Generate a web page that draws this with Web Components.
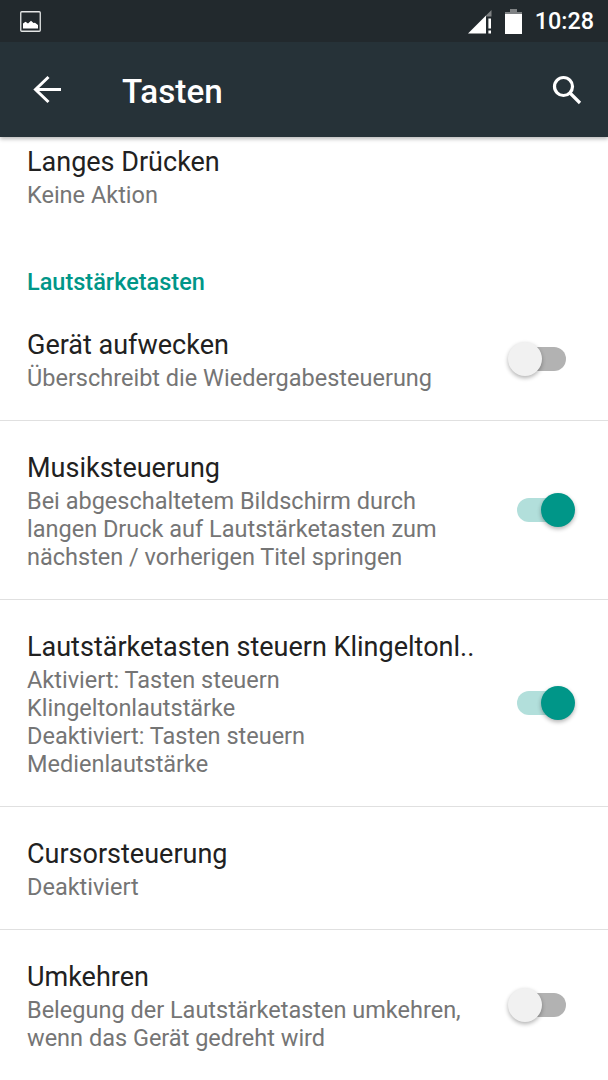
<!DOCTYPE html>
<html><head><meta charset="utf-8"><style>
html,body{margin:0;padding:0;background:#fff}
body{width:608px;height:1080px;overflow:hidden;font-family:Roboto,"Noto Sans",sans-serif}
settings-screen{height:1080px}
</style></head><body>
<settings-screen>
<status-bar slot="top"></status-bar>
<app-bar slot="top" title="Tasten"></app-bar>
<pref-row plain title="Langes Drücken" class="first">Keine Aktion</pref-row>
<pref-category>Lautstärketasten</pref-category>
<pref-row title="Gerät aufwecken" toggle="off" divider>Überschreibt die Wiedergabesteuerung</pref-row>
<pref-row title="Musiksteuerung" toggle="on" divider>Bei abgeschaltetem Bildschirm durch<br>langen Druck auf Lautstärketasten zum<br>nächsten / vorherigen Titel springen</pref-row>
<pref-row title="Lautstärketasten steuern Klingeltonl.." toggle="on" divider>Aktiviert: Tasten steuern<br>Klingeltonlautstärke<br>Deaktiviert: Tasten steuern<br>Medienlautstärke</pref-row>
<pref-row title="Cursorsteuerung" divider>Deaktiviert</pref-row>
<pref-row title="Umkehren" toggle="off">Belegung der Lautstärketasten umkehren,<br>wenn das Gerät gedreht wird</pref-row>
</settings-screen>
<script>
function def(name, html){
  customElements.define(name, class extends HTMLElement{
    connectedCallback(){
      if(this.shadowRoot) return;
      const r=this.attachShadow({mode:'open'});
      r.innerHTML=typeof html==='function'?html(this):html;
    }
  });
}
def('settings-screen',`<style>
:host{display:flex;flex-direction:column;width:608px;overflow:hidden;background:#fff}
.top{position:relative;z-index:2;flex:none;display:block;box-shadow:0 2px 4px rgba(0,0,0,.28)}
.list{flex:1;min-height:0;overflow:hidden;margin-top:5px}
</style><div class="top"><slot name="top"></slot></div><div class="list"><slot></slot></div>`);
def('status-bar',`<style>
:host{display:flex;align-items:center;height:42px;background:#22292d;color:#fff;padding:0 14px 0 20px;box-sizing:border-box}
.sp{flex:1}
svg{display:block}
.t{font:500 23.4px/42px Roboto,sans-serif;margin-left:13px}
</style>
<svg width="21" height="21" viewBox="0 0 21 21"><rect x=".75" y=".75" width="19.5" height="19.5" rx="1" fill="none" stroke="#e4e6e6" stroke-width="1.3"/><path d="M3 17.5V12.5L5.5 10.8 8 12.5 11 9.8 13.5 12 15 11.8 18 14V17.5Z" fill="#fff"/></svg>
<span class="sp"></span>
<svg width="25" height="25" viewBox="0 0 25 25"><path d="M1 24.5 L19 6.5 V24.5Z" fill="#fff"/><path d="M19 6.5 L24.5 1 V7.5H19Z" fill="#7f8284"/><rect x="21.4" y="9.5" width="2.6" height="10" fill="#fff"/><rect x="21.4" y="21.5" width="2.6" height="3" fill="#fff"/></svg>
<svg style="margin-left:13px" width="17" height="25" viewBox="0 0 17 25"><rect x="5" y="0" width="7" height="3" fill="#7f8284"/><rect x="0" y="3" width="17" height="3" fill="#7f8284"/><rect x="0" y="5" width="17" height="20" fill="#fff"/></svg>
<span class="t">10:28</span>`);
def('app-bar',e=>`<style>
:host{display:flex;align-items:center;height:95px;background:#263238;color:#fff;box-sizing:border-box;padding:0 0 0 33px}
h1{font:500 33.2px/40px Roboto,sans-serif;margin:4px 0 0 60px;flex:1;letter-spacing:.1px}
svg{display:block}
.s{margin-right:25px}
</style>
<svg width="29" height="29" viewBox="0 0 29 29" fill="none" stroke="#fff" stroke-width="3"><path d="M28 14.5H3"/><path d="M15.5 2 L2.5 14.5 L15.5 27"/></svg>
<h1>${e.getAttribute('title')}</h1>
<svg class="s" width="32" height="32" viewBox="0 0 32 32" fill="none" stroke="#fff" stroke-width="3.2"><circle cx="12.5" cy="12.5" r="9"/><path d="M19 19 L29 29"/></svg>`);
def('pref-category',`<style>
:host{display:block;font:500 23.5px/28px Roboto,sans-serif;color:#009688;padding:0 27px 2px}
</style><slot></slot>`);
def('toggle-switch',e=>`<style>
:host{display:block;position:relative;width:68px;height:36px}
.track{position:absolute;left:10px;right:9px;top:6px;height:24px;border-radius:12px;background:${e.hasAttribute('on')?'#b2dfdb':'#b2b2b2'}}
.thumb{position:absolute;top:1px;width:34px;height:34px;border-radius:50%;${e.hasAttribute('on')?'right:0;background:#009688':'left:1px;background:#f1f1f1'};box-shadow:0 2px 4px rgba(0,0,0,.3)}
</style><div class="track"></div><div class="thumb"></div>`);
def('pref-row',e=>{
  const t=e.getAttribute('toggle');
  const tg=t?`<toggle-switch ${t==='on'?'on':''}></toggle-switch>`:'';
  const f=e.classList.contains('first'), d=e.hasAttribute('divider');
  return `<style>
:host{display:flex;align-items:center;box-sizing:border-box;padding:${f?'1px':'28px'} 33px ${f?'59px':'28px'} 27px;${d?'border-bottom:1px solid #e0e0e0;':''}}
.b{flex:1;min-width:0}
.h{font:400 27px/38px Roboto,sans-serif;color:#212121;white-space:nowrap}
.s{font:400 23.5px/28px Roboto,sans-serif;color:#757575;white-space:nowrap}
</style><div class="b"><div class="h">${e.getAttribute('title')}</div><div class="s"><slot></slot></div></div>${tg}`;
});
</script>
</body></html>
